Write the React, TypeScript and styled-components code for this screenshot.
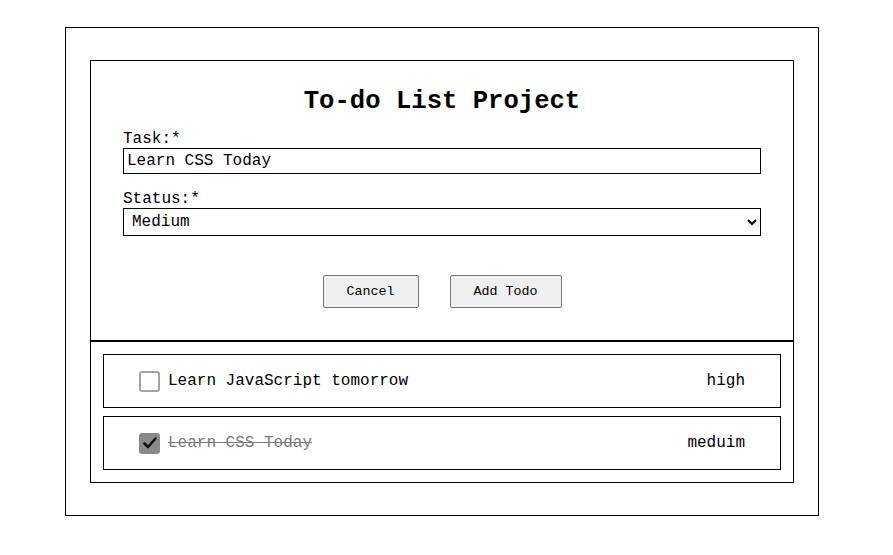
import React, { useState } from "react";
import styled, { createGlobalStyle } from "styled-components";

const GlobalStyle = createGlobalStyle`
  body {
    margin: 0;
    background: #fff;
    font-family: "Liberation Mono", "Courier New", monospace;
    color: #000;
  }
`;

const Page = styled.div`
  padding: 27px 0 0 65px;
`;

const OuterBox = styled.div`
  width: 754px;
  box-sizing: border-box;
  border: 1px solid #000;
  padding: 32px 24px;
`;

const Card = styled.div`
  border: 1px solid #000;
`;

const FormSection = styled.form`
  border-bottom: 2px solid #000;
  padding: 26px 32px 32px;
  display: flex;
  flex-direction: column;
`;

const Title = styled.h1`
  margin: 0 0 13px;
  font-size: 25.6px;
  line-height: 30px;
  font-weight: 700;
  text-align: center;
`;

const Field = styled.label<{ $last?: boolean }>`
  display: flex;
  flex-direction: column;
  font-size: 16px;
  line-height: 18px;
  margin-bottom: ${(p) => (p.$last ? 0 : 16)}px;
`;

const TextInput = styled.input`
  height: 26px;
  box-sizing: border-box;
  border: 1px solid #000;
  border-radius: 0;
  padding: 0 3px;
  font-family: inherit;
  font-size: 16px;
  color: #000;
  outline: none;
`;

const Select = styled.select`
  height: 28px;
  box-sizing: border-box;
  border: 1px solid #000;
  border-radius: 0;
  background: #fff;
  padding: 0 4px;
  font-family: inherit;
  font-size: 16px;
  color: #000;
  outline: none;
`;

const Actions = styled.div`
  display: flex;
  justify-content: center;
  gap: 31px;
  margin-top: 39px;
`;

const Button = styled.button<{ $w: number }>`
  width: ${(p) => p.$w}px;
  height: 33px;
  background: #efefef;
  border: 1px solid #767676;
  border-radius: 2px;
  font-family: inherit;
  font-size: 13.33px;
  color: #000;
  cursor: pointer;
`;

const List = styled.ul`
  list-style: none;
  margin: 0;
  padding: 12px;
  display: flex;
  flex-direction: column;
  gap: 8px;
`;

const Item = styled.li`
  height: 54px;
  box-sizing: border-box;
  border: 1px solid #000;
  display: flex;
  align-items: center;
  padding: 0 35px;
  font-size: 16px;
`;

const Check = styled.span<{ $on: boolean }>`
  width: 21px;
  height: 21px;
  box-sizing: border-box;
  border-radius: 3px;
  border: ${(p) => (p.$on ? "none" : "2px solid #a4a4a4")};
  background: ${(p) => (p.$on ? "#8a8a8a" : "#fff")};
  display: flex;
  align-items: center;
  justify-content: center;
  margin-right: 8px;
  cursor: pointer;
`;

const TaskText = styled.span<{ $done: boolean }>`
  flex: 1;
  color: ${(p) => (p.$done ? "#7a7a7a" : "#000")};
  text-decoration: ${(p) => (p.$done ? "line-through" : "none")};
`;

const Priority = styled.span``;

type Todo = { text: string; priority: string; done: boolean };

export default function App() {
  const [todos, setTodos] = useState<Todo[]>([
    { text: "Learn JavaScript tomorrow", priority: "high", done: false },
    { text: "Learn CSS Today", priority: "meduim", done: true },
  ]);

  const toggle = (i: number) =>
    setTodos(todos.map((t, j) => (j === i ? { ...t, done: !t.done } : t)));

  return (
    <Page>
      <GlobalStyle />
      <OuterBox>
        <Card>
          <FormSection onSubmit={(e) => e.preventDefault()}>
            <Title>To-do List Project</Title>
            <Field>
              Task:*
              <TextInput defaultValue="Learn CSS Today" />
            </Field>
            <Field $last>
              Status:*
              <Select defaultValue="medium">
                <option value="high">High</option>
                <option value="medium">Medium</option>
                <option value="low">Low</option>
              </Select>
            </Field>
            <Actions>
              <Button type="button" $w={96}>
                Cancel
              </Button>
              <Button type="submit" $w={112}>
                Add Todo
              </Button>
            </Actions>
          </FormSection>
          <List>
            {todos.map((t, i) => (
              <Item key={i}>
                <Check $on={t.done} onClick={() => toggle(i)}>
                  {t.done && (
                    <svg width="14" height="12" viewBox="0 0 14 12">
                      <path
                        d="M1.5 6.5 L5 10 L12.5 1.5"
                        fill="none"
                        stroke="#111"
                        strokeWidth="2.6"
                        strokeLinecap="round"
                        strokeLinejoin="round"
                      />
                    </svg>
                  )}
                </Check>
                <TaskText $done={t.done}>{t.text}</TaskText>
                <Priority>{t.priority}</Priority>
              </Item>
            ))}
          </List>
        </Card>
      </OuterBox>
    </Page>
  );
}
